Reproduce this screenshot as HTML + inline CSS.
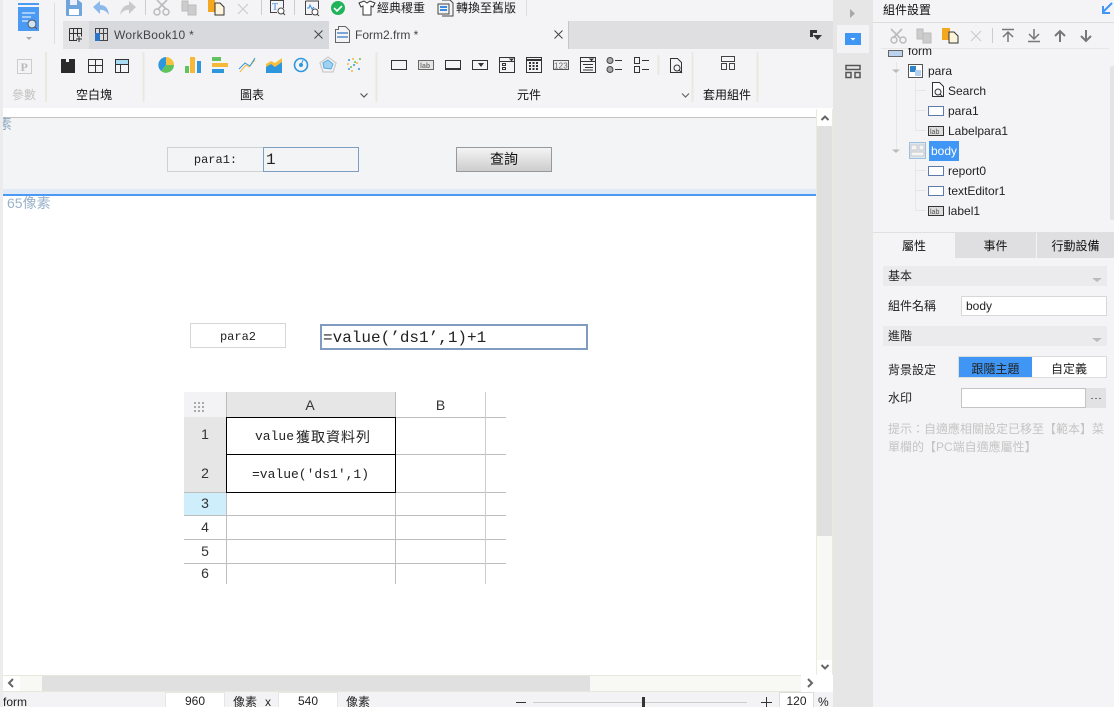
<!DOCTYPE html>
<html><head><meta charset="utf-8">
<style>
html,body{margin:0;padding:0;width:1114px;height:707px;overflow:hidden;background:#fff}
*{box-sizing:border-box}
body{font-family:"Liberation Sans","Noto Sans CJK TC",sans-serif;font-size:12px;color:#222;position:relative}
.a{position:absolute}
.t{position:absolute;white-space:nowrap;line-height:16px}
.m{font-family:"Liberation Mono","Noto Serif CJK SC",monospace}
svg{position:absolute;overflow:visible}
.line{position:absolute;background:#bdbdbd}
.c{text-align:center}
</style></head><body>

<!-- left edge -->
<div class="a" style="left:0;top:0;width:3px;height:707px;background:#ececec"></div>
<!-- top toolbar bg -->
<div class="a" style="left:3px;top:0;width:830px;height:108px;background:#f4f4f6"></div>
<!-- top icons -->
<svg style="left:0;top:0" width="560" height="108" viewBox="0 0 560 108">
 <rect x="18" y="3" width="21" height="2" fill="#4b9bf5"/>
 <path d="M18 7H39V31H18Z" fill="#4b9bf5"/><path d="M22 13H35M22 17H31M22 21H28" stroke="#fff"/><circle cx="32" cy="24" r="4" fill="#cfe4f7" stroke="#555"/><path d="M35 27l2 2" stroke="#555"/>
 <path d="M26 37h6l-3 3z" fill="#aaa"/>
 <path d="M54.500 3V44" stroke="#ddd"/>
 <path d="M66 0H78L82 3V15Q82 16 81 16H67Q66 16 66 15Z" fill="#6fa4dd"/><path d="M69 9H79V15H69Z" fill="#fff"/><path d="M70 0H77V5H70Z" fill="#eef"/>
 <path d="M93 7L100 1V5Q108 5 109 15Q105 9 100 10V14Z" fill="#8cb9ec"/>
 <path d="M136 7L129 1V5Q122 5 120 15Q124 9 129 10V14Z" fill="#c9c9c9"/>
 <path d="M145.500 0V15" stroke="#ccc"/>
 <path d="M157 0L166 9M167 0L158 9" stroke="#bbb" stroke-width="1.6"/><circle cx="157" cy="12" r="3" fill="none" stroke="#bbb" stroke-width="1.5"/><circle cx="166" cy="12" r="3" fill="none" stroke="#bbb" stroke-width="1.5"/>
 <path d="M182 1H188V11H182ZM188 5H196V15H188Z" fill="#ccc" stroke="#bbb"/>
 <rect x="208" y="0" width="7" height="12" fill="#f3a820"/><path d="M215 3H220L224 7V15H215Z" fill="#fdf4dc" stroke="#333"/>
 <path d="M238 4L248 14M248 4L238 14" stroke="#ccc" stroke-width="1.2"/>
 <path d="M261.500 0V15" stroke="#ccc"/>
 <path d="M270.500 0V12.500H277M270.500 0.500H283.500V8" fill="none" stroke="#444"/><text x="272" y="10" font-size="10" fill="#3a8be0" font-family="Liberation Serif">T</text><circle cx="281" cy="11" r="3" fill="#fff" stroke="#444"/><path d="M283 13l2 2" stroke="#444"/>
 <path d="M294.500 0V15" stroke="#ccc"/>
 <path d="M305.500 1H318.500V9M305.500 1V14.500H312" fill="none" stroke="#444"/><path d="M307 8L309 8 310 5 312 9 314 7" fill="none" stroke="#3a8be0"/><circle cx="315" cy="12" r="3" fill="#fff" stroke="#444"/><path d="M317 14l2 2" stroke="#444"/>
 <circle cx="338" cy="8" r="7" fill="#1fb45a"/><path d="M334 8l3 3 5-5" fill="none" stroke="#fff" stroke-width="1.6"/>
 <path d="M359 3L364 1 367 3 370 1 375 3 373 7 371 6V15H363V6L361 7Z" fill="#fff" stroke="#333"/>
 <path d="M442 0H450L453 3V16H442M438 4H449V14H438Z" fill="#f4f4f6" stroke="#444"/><path d="M440 7H447M440 10H447" stroke="#3a8be0" stroke-width="2"/>
 <path d="M526.500 0V16" stroke="#ddd"/>
</svg>
<div class="t" style="left:377px;top:0;font-size:12px">經典稷重</div>
<div class="t" style="left:456px;top:0;font-size:12px">轉換至舊版</div>

<!-- tabs -->
<div class="a" style="left:63px;top:21px;width:770px;height:28px;background:#dfdfe2"></div>
<div class="a" style="left:63px;top:21px;width:26px;height:28px;background:#e3e3e5"></div>
<div class="a" style="left:89px;top:21px;width:240px;height:28px;background:#d8d9dc"></div>
<div class="a" style="left:329px;top:21px;width:240px;height:28px;background:#f4f4f6;border-right:1px solid #c6c6c6"></div>
<svg style="left:0;top:0" width="833" height="60" viewBox="0 0 833 60">
 <path d="M69.500 28.500H81.500V36.500M69.500 28.500V40.500H77M73.500 28.500V40.500M77.500 28.500V36.500M69.500 33.500H81.500" fill="none" stroke="#333"/><path d="M76 39H82M79 36V42" stroke="#333"/>
 <path d="M95.500 28.500H107.500V40.500H95.500ZM99.500 28.500V40.500M103.500 28.500V40.500M95.500 33.500H107.500" fill="none" stroke="#444"/><rect x="95" y="33" width="5" height="8" fill="#2b76c8"/>
 <path d="M314.500 30.500L322.500 38.500M322.500 30.500L314.500 38.500" stroke="#444"/>
 <path d="M338.500 26.500H345.500L349.500 30.500V42.500H335.500V29.500H338.500Z" fill="#f4f4f6" stroke="#666"/><path d="M337 33H348M337 37H348" stroke="#79a6d6" stroke-width="2"/>
 <path d="M554.500 30.500L562.500 38.500M562.500 30.500L554.500 38.500" stroke="#444"/>
 <path d="M810 30H817V33H813V37H810Z" fill="#333"/><path d="M813 35H822L817.500 40Z" fill="#333"/>
</svg>
<div class="t" style="left:114px;top:27px;font-size:12px;color:#444;letter-spacing:.3px">WorkBook10 *</div>
<div class="t" style="left:355px;top:27px;font-size:12px;color:#444">Form2.frm *</div>

<!-- ribbon icons -->
<svg style="left:0;top:0" width="833" height="108" viewBox="0 0 833 108">
 <path d="M46 52V102M143.500 52V102M376.500 52V102M692.500 52V102M757.500 52V102M658.500 55V75" stroke="#ebe8e0" stroke-width="2"/>
 <rect x="17.500" y="59.500" width="14" height="14" fill="#f4f4f6" stroke="#ccc"/><text x="20.500" y="71" font-size="12" font-weight="bold" fill="#bbb" font-family="Liberation Serif">P</text>
 <path d="M61 59H66V62H69V59H75V73H61Z" fill="#2a2a2a"/>
 <path d="M88.500 59.500H102.500V72.500H88.500ZM88.500 65.500H102.500M95.500 59.500V72.500" fill="none" stroke="#333"/>
 <rect x="115" y="59" width="14" height="5" fill="#a9dcf2"/><path d="M115.500 59.500H128.500V72.500H115.500ZM115.500 64.500H128.500M120.500 64.500V72.500" fill="none" stroke="#333"/>
 <path d="M166 57A8 8 0 0 1 174 65H166Z" fill="#f7bf3c"/><path d="M166 65H174A8 8 0 0 1 161 71Z" fill="#5fc35c"/><path d="M166 65L161 71A8 8 0 0 1 166 57Z" fill="#2e96dd"/>
 <rect x="185" y="66" width="4" height="7" fill="#62c25f"/><rect x="190" y="57" width="5" height="16" fill="#f5b93a"/><rect x="197" y="61" width="4" height="12" fill="#2e96dd"/>
 <rect x="212" y="57" width="9" height="4" fill="#62c25f"/><rect x="212" y="63" width="16" height="4" fill="#f5b93a"/><rect x="212" y="69" width="12" height="4" fill="#2e96dd"/>
 <path d="M240 72L246 65 249 67 255 60" fill="none" stroke="#f5b93a"/><path d="M239 69L245 63 250 66 255 58" fill="none" stroke="#2e96dd"/>
 <path d="M266 64L271 61 275 63 282 58V73H266Z" fill="#f7bf3c"/><path d="M266 67L271 64 275 67 282 62V73H266Z" fill="#2e96dd"/>
 <circle cx="301" cy="65" r="6.500" fill="none" stroke="#2e96dd" stroke-width="1.600"/><path d="M301 65L303 60" stroke="#2e96dd"/><circle cx="301" cy="65" r="2" fill="#2e96dd"/>
 <path d="M328 57L336 63 333 72H323L320 63Z" fill="none" stroke="#ccc" stroke-width="1.300"/><path d="M328 60L333 64 331 69 324 68 323 63Z" fill="#9fd2ef" stroke="#5aa7dd"/>
 <g fill="#2e96dd"><circle cx="349" cy="60" r="1"/><circle cx="354" cy="65" r="1"/><circle cx="359" cy="69" r="1"/><circle cx="349" cy="69" r="1"/></g><g fill="#f5b93a"><circle cx="353" cy="59" r="1"/><circle cx="348" cy="64" r="1"/><circle cx="357" cy="63" r="1"/><circle cx="352" cy="71" r="1"/></g><g fill="#62c25f"><circle cx="360" cy="59" r="1"/><circle cx="355" cy="62" r="1"/><circle cx="351" cy="67" r="1"/></g>
 <path d="M360.500 93.500L364 97 367.500 93.500" fill="none" stroke="#555" stroke-width="1.200"/>
 <path d="M682 93.500L685.500 97 689 93.500" fill="none" stroke="#666" stroke-width="1.200"/>
 <rect x="391.500" y="60.500" width="15" height="9" fill="none" stroke="#333"/>
 <rect x="418.500" y="60.500" width="15" height="9" fill="#e6e6e6" stroke="#666"/><text x="420" y="68" font-size="7" font-weight="bold" fill="#777">lab</text>
 <rect x="445.500" y="60.500" width="15" height="8" fill="none" stroke="#333"/><path d="M445 69.500H461" stroke="#333"/>
 <rect x="472.500" y="60.500" width="15" height="9" fill="none" stroke="#333"/><path d="M478 63H484L481 67Z" fill="#333"/>
 <rect x="499.500" y="57.500" width="15" height="15" fill="none" stroke="#333"/><path d="M499 61.500H515M510 59H513L511.500 60.500Z" stroke="#333" fill="#333"/><rect x="502.500" y="63.500" width="3" height="2" fill="none" stroke="#333"/><rect x="502.500" y="67.500" width="3" height="2" fill="none" stroke="#333"/>
 <rect x="526.500" y="57.500" width="15" height="15" fill="none" stroke="#333"/><path d="M526 60H542" stroke="#333" stroke-width="2"/><path d="M529 63h2M532.500 63h2M536 63h2M529 66h2M532.500 66h2M536 66h2M529 69h2M532.500 69h2M536 69h2" stroke="#333" stroke-width="2"/>
 <rect x="553.500" y="60.500" width="15" height="9" fill="#eee" stroke="#555"/><text x="554" y="68.500" font-size="8" fill="#666" letter-spacing=".2">123</text>
 <rect x="580.500" y="57.500" width="15" height="15" fill="none" stroke="#333"/><path d="M580 61.500H596M583 64.500H593M585 67.500H593M583 70H593M590 59H593L591.500 60.500Z" stroke="#333"/>
 <circle cx="610" cy="60.500" r="3" fill="#aaa" stroke="#444"/><circle cx="610" cy="69.500" r="3" fill="#aaa" stroke="#444"/><path d="M615 60.500H622M615 69.500H622" stroke="#333"/>
 <rect x="634.500" y="57.500" width="5" height="6" fill="none" stroke="#333"/><rect x="634.500" y="66.500" width="5" height="6" fill="none" stroke="#333"/><path d="M642 60.500H649M642 69.500H649" stroke="#333"/>
 <path d="M670.500 58.500H677.500L681.500 62.500V72.500H670.500Z" fill="none" stroke="#333"/><circle cx="677" cy="68" r="3" fill="#f4f4f6" stroke="#333"/><path d="M679 70l3 3" stroke="#333"/>
 <path d="M721.500 56.500H734.500V61.500H721.500ZM721.500 63.500H726.500V69.500H721.500ZM729.500 63.500H734.500V69.500H729.500Z" fill="none" stroke="#444"/>
</svg>
<div class="t" style="left:12px;top:87px;color:#c2c2c2">參數</div>
<div class="t" style="left:76px;top:87px;color:#111">空白塊</div>
<div class="t" style="left:240px;top:87px;color:#111">圖表</div>
<div class="t" style="left:517px;top:87px;color:#111">元件</div>
<div class="t" style="left:703px;top:87px;color:#111">套用組件</div>

<!-- canvas -->
<div class="a" style="left:3px;top:109px;width:814px;height:9px;background:#fff"></div>
<div class="a" style="left:3px;top:117px;width:814px;height:1px;background:#c4c4c4"></div>
<div class="a" style="left:3px;top:118px;width:814px;height:66px;background:#f3f4f6"></div>
<div class="a" style="left:3px;top:189px;width:814px;height:5px;background:#dfeaf6"></div>
<div class="a" style="left:3px;top:194px;width:814px;height:2px;background:#4a9af5"></div>
<div class="a" style="left:3px;top:118px;width:814px;height:71px;background:#f3f4f6"></div>
<div class="a" style="left:3px;top:116px;width:12px;height:18px;overflow:hidden"><div class="t" style="left:-5px;top:0;width:14px;font-size:14px;color:#8fa9c2;direction:rtl">素</div></div>
<div class="t" style="left:7px;top:195px;font-size:14px;color:#9ab2ca">65像素</div>

<div class="a c m" style="left:167px;top:147px;width:97px;height:25px;border:1px solid #d0d0d0;background:#f3f4f6;font-size:12px;line-height:25px;color:#222">para1:</div>
<div class="a m" style="left:263px;top:147px;width:96px;height:25px;border:1px solid #7d9dc2;background:#f3f4f6;font-size:16px;line-height:25px;padding-left:2px;color:#222">1</div>
<div class="a c" style="left:456px;top:147px;width:96px;height:25px;border:1px solid #999;background:linear-gradient(#f4f4f4,#cdcdcd);font-size:14px;line-height:23px;color:#111">查詢</div>

<div class="a c m" style="left:190px;top:323px;width:96px;height:25px;border:1px solid #d6d6d6;font-size:12px;line-height:26px;color:#222">para2</div>
<div class="a m" style="left:320px;top:324px;width:268px;height:26px;border:2px solid #7f9cc0;font-size:16px;line-height:24px;padding-left:1px;color:#222">=value(’ds1’,1)+1</div>

<!-- grid -->
<div class="a" style="left:184px;top:392px;width:43px;height:25px;background:#f3f3f5"></div>
<div class="a" style="left:227px;top:392px;width:169px;height:25px;background:#e6e6e6"></div>
<div class="a" style="left:184px;top:417px;width:43px;height:76px;background:#e6e6e6"></div>
<div class="a" style="left:184px;top:493px;width:43px;height:22px;background:#cfeefb"></div>
<svg style="left:194px;top:402px" width="12" height="12"><path d="M0 1h2M4 1h2M8 1h2M0 5h2M4 5h2M8 5h2M0 9h2M4 9h2M8 9h2" stroke="#aaa" stroke-width="2"/></svg>
<div class="line" style="left:396px;top:417px;width:110px;height:1px"></div>
<div class="line" style="left:396px;top:454px;width:110px;height:1px"></div>
<div class="line" style="left:184px;top:492px;width:322px;height:1px"></div>
<div class="line" style="left:184px;top:515px;width:322px;height:1px"></div>
<div class="line" style="left:184px;top:539px;width:322px;height:1px"></div>
<div class="line" style="left:184px;top:563px;width:322px;height:1px"></div>
<div class="line" style="left:226px;top:392px;width:1px;height:192px"></div>
<div class="line" style="left:395px;top:392px;width:1px;height:192px"></div>
<div class="line" style="left:485px;top:392px;width:1px;height:192px;background:#ccc"></div>
<div class="a" style="left:226px;top:417px;width:170px;height:76px;border:1px solid #000"></div>
<div class="a" style="left:226px;top:454px;width:170px;height:1px;background:#000"></div>
<div class="t c" style="left:226px;top:397px;width:168px;font-size:14px;color:#333">A</div>
<div class="t c" style="left:396px;top:397px;width:89px;font-size:14px;color:#333">B</div>
<div class="t c" style="left:184px;top:426px;width:42px;font-size:14px;color:#333">1</div>
<div class="t c" style="left:184px;top:465px;width:42px;font-size:14px;color:#333">2</div>
<div class="t c" style="left:184px;top:495px;width:42px;font-size:14px;color:#333">3</div>
<div class="t c" style="left:184px;top:519px;width:42px;font-size:14px;color:#333">4</div>
<div class="t c" style="left:184px;top:543px;width:42px;font-size:14px;color:#333">5</div>
<div class="t c" style="left:184px;top:565px;width:42px;font-size:14px;color:#333">6</div>
<div class="t" style="left:255px;top:429px;font-size:13px;color:#222;font-family:'Liberation Mono',monospace">value</div>
<div class="t" style="left:296px;top:429px;font-size:14px;letter-spacing:1px;color:#222">獲取資料列</div>
<div class="t m" style="left:252px;top:467px;font-size:13px;color:#222">=value('ds1',1)</div>

<!-- v scrollbar -->
<div class="a" style="left:816px;top:109px;width:17px;height:566px;background:#f8f8f5;border-left:1px solid #eee9dc;border-right:1px solid #eee9dc"></div>
<div class="a" style="left:817px;top:109px;width:15px;height:17px;background:#fff"></div>
<div class="a" style="left:817px;top:126px;width:15px;height:410px;background:#e0e0e0"></div>
<div class="a" style="left:817px;top:660px;width:15px;height:15px;background:#fff"></div>
<svg style="left:0;top:0" width="833" height="707"><path d="M821.500 120L825 116.500 828.500 120M821.500 665L825 668.500 828.500 665" fill="none" stroke="#666" stroke-width="2"/></svg>

<!-- h scrollbar -->
<div class="a" style="left:3px;top:675px;width:814px;height:17px;background:#f8f8f5;border-top:1px solid #e9e7dc;border-bottom:1px solid #e9e7dc"></div>
<div class="a" style="left:42px;top:676px;width:548px;height:15px;background:#e0e0e0"></div>
<div class="a" style="left:3px;top:676px;width:17px;height:15px;background:#fff"></div>
<div class="a" style="left:801px;top:675px;width:16px;height:17px;background:#fff"></div>
<svg style="left:0;top:0" width="833" height="707"><path d="M13 679L9 683 13 687M808 679L812 683 808 687" fill="none" stroke="#666" stroke-width="2"/></svg>

<!-- status -->
<div class="a" style="left:3px;top:692px;width:830px;height:15px;background:#f3f3f5"></div>
<div class="t" style="left:3px;top:694px;color:#222">form</div>
<div class="a c" style="left:165px;top:692px;width:60px;height:15px;background:#fff;border:1px solid #e6e6e6;border-bottom:0;line-height:17px;color:#222">960</div>
<div class="t" style="left:233px;top:694px;color:#222">像素</div>
<div class="t" style="left:265px;top:694px;color:#222">x</div>
<div class="a c" style="left:278px;top:692px;width:60px;height:15px;background:#fff;border:1px solid #e6e6e6;border-bottom:0;line-height:17px;color:#222">540</div>
<div class="t" style="left:346px;top:694px;color:#222">像素</div>
<div class="a" style="left:516px;top:702px;width:10px;height:1px;background:#333"></div>
<div class="a" style="left:533px;top:702px;width:214px;height:1px;background:#ccc"></div>
<div class="a" style="left:642px;top:697px;width:3px;height:10px;background:#333"></div>
<div class="a" style="left:761px;top:702px;width:11px;height:1px;background:#333"></div>
<div class="a" style="left:766px;top:697px;width:1px;height:10px;background:#333"></div>
<div class="a c" style="left:779px;top:692px;width:35px;height:15px;background:#fff;border:1px solid #ddd;border-bottom:0;line-height:17px;color:#222">120</div>
<div class="t" style="left:818px;top:694px;color:#222">%</div>

<!-- side rail -->
<div class="a" style="left:833px;top:0;width:40px;height:707px;background:#e6e6e6"></div>
<div class="a" style="left:837px;top:25px;width:32px;height:28px;background:#f3f3f5"></div>
<div class="a" style="left:845px;top:33px;width:16px;height:12px;background:#3f96f5"></div>
<svg style="left:0;top:0" width="873" height="90"><path d="M850 9L855 13.500 850 18Z" fill="#a8a8a8"/><path d="M850.500 38H855.500L853 40.500Z" fill="#fff"/><path d="M846 65.500H860V69.500H846ZM846 72.500H851V77.500H846ZM855 72.500H860V77.500H855Z" fill="none" stroke="#555" stroke-width="1.500"/></svg>

<!-- right panel -->
<div class="a" style="left:873px;top:0;width:241px;height:707px;background:#f4f4f6"></div>
<div class="t" style="left:883px;top:2px;font-size:12px;color:#111">組件設置</div>
<div class="a" style="left:873px;top:22px;width:241px;height:1px;background:#dcdcdc"></div>
<svg style="left:873px;top:0" width="241" height="235" viewBox="873 0 241 235">
 <path d="M1112 3L1103 12M1103 6V13H1110" fill="none" stroke="#3f96f5" stroke-width="2"/>
 <path d="M891 29L900 38M902 29L893 38" stroke="#bbb" stroke-width="1.600"/><circle cx="894" cy="40" r="3" fill="none" stroke="#bbb" stroke-width="1.500"/><circle cx="903" cy="40" r="3" fill="none" stroke="#bbb" stroke-width="1.500"/>
 <path d="M917 29H923V39H917ZM923 33H931V43H923Z" fill="#ccc" stroke="#bbb"/>
 <rect x="942" y="28" width="8" height="12" fill="#f3a820"/><path d="M949 32H954L958 36V43H949Z" fill="#fdf4dc" stroke="#333"/>
 <path d="M971 31L981 41M981 31L971 41" stroke="#ccc" stroke-width="1.200"/>
 <path d="M992.500 28V43" stroke="#ccc"/>
 <path d="M1002 29.500H1014M1008 42V33M1003 37L1008 32 1013 37" fill="none" stroke="#777" stroke-width="1.500"/>
 <path d="M1028 41.500H1040M1034 29V38M1029 34L1034 39 1039 34" fill="none" stroke="#777" stroke-width="1.500"/>
 <path d="M1060 42V31M1055 36L1060 31 1065 36" fill="none" stroke="#777" stroke-width="2"/>
 <path d="M1086 30V41M1081 36L1086 41 1091 36" fill="none" stroke="#777" stroke-width="2"/>
 <path d="M881 48.500H1109" stroke="#e6e6e6"/>
 <rect x="888.500" y="50.500" width="14" height="6" fill="#bcd3f0" stroke="#666"/>
 <path d="M896.500 62V150M915.500 80V130M915.500 90.500H926M915.500 110.500H926M915.500 130.500H926M915.500 170.500H926M915.500 190.500H926M915.500 210.500H926M915.500 160V210" fill="none" stroke="#e6e6e6"/>
 <path d="M892 69.500H900L896 73Z" fill="#bbb"/><path d="M892 149.500H900L896 153Z" fill="#bbb"/>
 <rect x="908.500" y="64.500" width="14" height="13" fill="#fff" stroke="#555"/><rect x="910" y="66" width="6" height="6" fill="#2f83c7"/><rect x="915" y="70" width="6" height="6" fill="#b5cfee"/>
 <path d="M932.500 82.500H939.500L943.500 86.500V96.500H932.500Z" fill="#fff" stroke="#333"/><circle cx="938" cy="92" r="3" fill="#f4f4f6" stroke="#333"/><path d="M940 94l3 3" stroke="#333"/>
 <rect x="928.500" y="106.500" width="15" height="9" fill="#fff" stroke="#5d7ba8"/>
 <rect x="928.500" y="126.500" width="15" height="9" fill="#ddd" stroke="#333"/><text x="930" y="134" font-size="7" fill="#555">lab</text>
 <rect x="909.500" y="142.500" width="16" height="16" fill="#dde7f0" stroke="#9cc0dd"/><path d="M911 145h6v5h-6zM919 145h5v5h-5zM911 152h13v4h-13z" fill="#f5f5f5" stroke="#c9c9c9"/>
 <rect x="928.500" y="166.500" width="15" height="9" fill="#fff" stroke="#5d7ba8"/>
 <rect x="928.500" y="186.500" width="15" height="9" fill="#fff" stroke="#5d7ba8"/>
 <rect x="928.500" y="206.500" width="15" height="9" fill="#ddd" stroke="#333"/><text x="930" y="214" font-size="7" fill="#555">lab</text>
</svg>
<div class="a" style="left:1110px;top:66px;width:4px;height:154px;background:#e4e4e4;border-radius:2px 0 0 2px"></div>
<div class="t" style="left:908px;top:43px;color:#222;clip-path:inset(5px 0 0 0)">form</div>
<div class="t" style="left:928px;top:63px;color:#222">para</div>
<div class="t" style="left:948px;top:83px;color:#222">Search</div>
<div class="t" style="left:948px;top:103px;color:#222">para1</div>
<div class="t" style="left:948px;top:123px;color:#222">Labelpara1</div>
<div class="a" style="left:929px;top:141px;width:30px;height:20px;background:#3f96f5"></div>
<div class="t" style="left:931px;top:143px;color:#fff">body</div>
<div class="t" style="left:948px;top:163px;color:#222">report0</div>
<div class="t" style="left:948px;top:183px;color:#222">textEditor1</div>
<div class="t" style="left:948px;top:203px;color:#222">label1</div>

<!-- tabs -->
<div class="a" style="left:873px;top:232px;width:241px;height:1px;background:#e0e0e0"></div>
<div class="a" style="left:955px;top:233px;width:159px;height:25px;background:#dfdfe1"></div>
<div class="a" style="left:1036px;top:233px;width:1px;height:25px;background:#f4f4f6"></div>
<div class="t c" style="left:873px;top:238px;width:82px;color:#111">屬性</div>
<div class="t c" style="left:955px;top:238px;width:81px;color:#111">事件</div>
<div class="t c" style="left:1037px;top:238px;width:77px;color:#111">行動設備</div>

<div class="a" style="left:883px;top:266px;width:224px;height:20px;background:#ebebed"></div>
<div class="t" style="left:888px;top:268px;color:#222">基本</div>
<div class="t" style="left:888px;top:298px;color:#222">組件名稱</div>
<div class="a" style="left:961px;top:296px;width:146px;height:20px;background:#fff;border:1px solid #d8d8d8;line-height:18px;padding-left:4px;color:#222">body</div>
<div class="a" style="left:883px;top:326px;width:224px;height:20px;background:#ebebed"></div>
<div class="t" style="left:888px;top:328px;color:#222">進階</div>
<div class="t" style="left:888px;top:362px;color:#222">背景設定</div>
<div class="a" style="left:958px;top:356px;width:149px;height:22px;background:#fff;border:1px solid #dcdcdc"></div>
<div class="a" style="left:959px;top:357px;width:73px;height:20px;background:#3f96f5"></div>
<div class="t c" style="left:959px;top:361px;width:73px;color:#222">跟隨主題</div>
<div class="t c" style="left:1032px;top:361px;width:74px;color:#222">自定義</div>
<div class="t" style="left:888px;top:390px;color:#222">水印</div>
<div class="a" style="left:961px;top:388px;width:125px;height:20px;background:#fff;border:1px solid #c4c4c4"></div>
<div class="a" style="left:1086px;top:388px;width:20px;height:20px;background:#e2e2e4"></div>
<svg style="left:0;top:0" width="1114" height="420"><path d="M1092 278H1102L1097 282ZM1092 338H1102L1097 342Z" fill="#bbb"/><path d="M1091 398.500h2M1095 398.500h2M1099 398.500h2" stroke="#777"/></svg>
<div class="t" style="left:888px;top:421px;color:#c4c4c4;width:220px;white-space:nowrap">提示：自適應相關設定已移至【範本】菜</div>
<div class="t" style="left:888px;top:439px;color:#c4c4c4">單欄的【PC端自適應屬性】</div>

</body></html>
